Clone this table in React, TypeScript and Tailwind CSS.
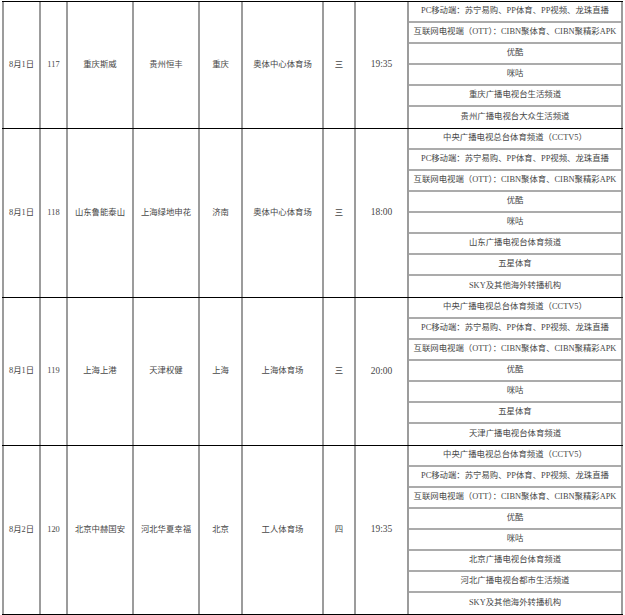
type Match = {
  date: string;
  no: string;
  home: string;
  away: string;
  city: string;
  venue: string;
  weekday: string;
  time: string;
  channels: string[];
};

const PC = "PC移动端：苏宁易购、PP体育、PP视频、龙珠直播";
const OTT = "互联网电视端（OTT）：CIBN聚体育、CIBN聚精彩APK";
const CCTV5 = "中央广播电视总台体育频道（CCTV5）";

const matches: Match[] = [
  {
    date: "8月1日",
    no: "117",
    home: "重庆斯威",
    away: "贵州恒丰",
    city: "重庆",
    venue: "奥体中心体育场",
    weekday: "三",
    time: "19:35",
    channels: [PC, OTT, "优酷", "咪咕", "重庆广播电视台生活频道", "贵州广播电视台大众生活频道"],
  },
  {
    date: "8月1日",
    no: "118",
    home: "山东鲁能泰山",
    away: "上海绿地申花",
    city: "济南",
    venue: "奥体中心体育场",
    weekday: "三",
    time: "18:00",
    channels: [CCTV5, PC, OTT, "优酷", "咪咕", "山东广播电视台体育频道", "五星体育", "SKY及其他海外转播机构"],
  },
  {
    date: "8月1日",
    no: "119",
    home: "上海上港",
    away: "天津权健",
    city: "上海",
    venue: "上海体育场",
    weekday: "三",
    time: "20:00",
    channels: [CCTV5, PC, OTT, "优酷", "咪咕", "五星体育", "天津广播电视台体育频道"],
  },
  {
    date: "8月2日",
    no: "120",
    home: "北京中赫国安",
    away: "河北华夏幸福",
    city: "北京",
    venue: "工人体育场",
    weekday: "四",
    time: "19:35",
    channels: [CCTV5, PC, OTT, "优酷", "咪咕", "北京广播电视台体育频道", "河北广播电视台都市生活频道", "SKY及其他海外转播机构"],
  },
];

function Cell({ width, children }: { width: string; children: React.ReactNode }) {
  return (
    <div className={`${width} shrink-0 flex items-center justify-center border-l-2 border-[#9c9c9c]`}>
      {children}
    </div>
  );
}

function MatchRow({ m, first }: { m: Match; first: boolean }) {
  return (
    <div className={`flex border-b border-black ${first ? "border-t" : ""}`}>
      <Cell width="w-[37px]">{m.date}</Cell>
      <Cell width="w-[27px]">{m.no}</Cell>
      <Cell width="w-[66px]">{m.home}</Cell>
      <Cell width="w-[66px]">{m.away}</Cell>
      <Cell width="w-[43px]">{m.city}</Cell>
      <Cell width="w-[81px]">{m.venue}</Cell>
      <Cell width="w-[32px]">{m.weekday}</Cell>
      <Cell width="w-[53px]">
        <span className="text-[9.5px]">{m.time}</span>
      </Cell>
      <div className="w-[216px] shrink-0 flex flex-col border-x-2 border-[#9c9c9c]">
        {m.channels.map((c, i) => (
          <div
            key={i}
            className={`h-[21px] flex items-center justify-center ${
              i < m.channels.length - 1 ? "border-b-2 border-[#ababab]" : ""
            }`}
          >
            {c}
          </div>
        ))}
      </div>
    </div>
  );
}

export default function App() {
  return (
    <div className="w-[625px] h-[615px] overflow-hidden bg-white pt-[1px] text-[8.4px] leading-none text-[#474747] font-['Liberation_Serif','Noto_Sans_CJK_SC',serif]">
      <div className="ml-[2px] w-[621px]">
        {matches.map((m, i) => (
          <MatchRow key={m.no} m={m} first={i === 0} />
        ))}
      </div>
    </div>
  );
}
